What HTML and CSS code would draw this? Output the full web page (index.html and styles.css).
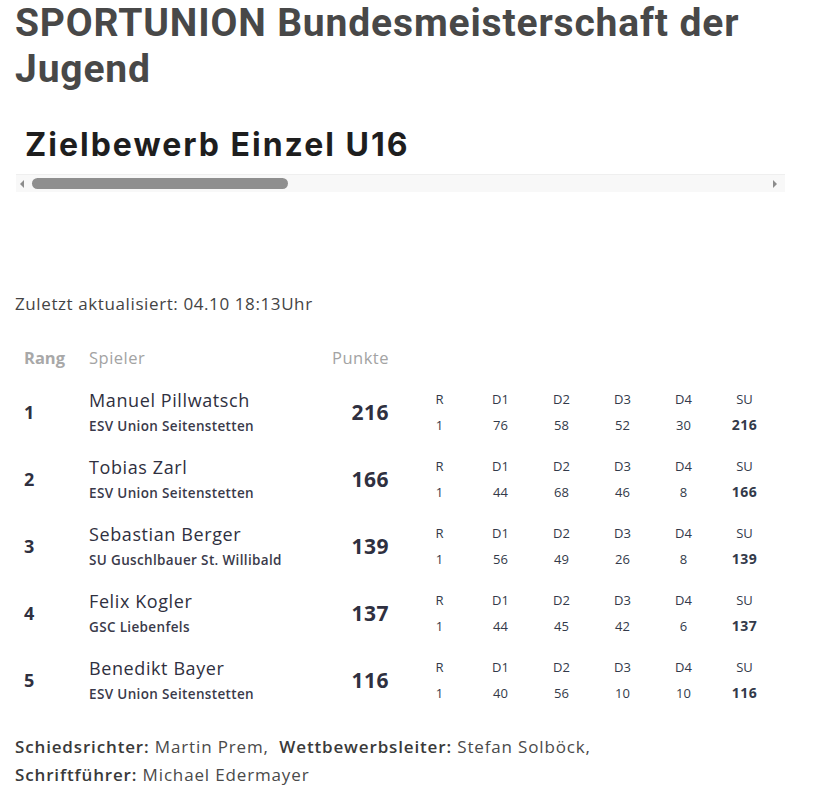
FILE: index.html
```html
<!DOCTYPE html>
<html lang="de">
<head>
<meta charset="utf-8">
<title>SPORTUNION Bundesmeisterschaft der Jugend</title>
<link rel="stylesheet" href="styles.css">
</head>
<body>
<h1 class="title">SPORTUNION Bundesmeisterschaft der Jugend</h1>
<h2 class="subtitle">Zielbewerb Einzel U16</h2>
<div class="scrollbar">
  <span class="arrow arrow-left"></span>
  <div class="track"><div class="thumb"></div></div>
  <span class="arrow arrow-right"></span>
</div>

<p class="updated">Zuletzt aktualisiert: 04.10 18:13Uhr</p>

<div class="results">
  <div class="head">
    <span class="h-rang">Rang</span>
    <span class="h-spieler">Spieler</span>
    <span class="h-punkte">Punkte</span>
    <span></span>
  </div>

  <div class="row">
    <span class="rank">1</span>
    <div class="player"><span class="name">Manuel Pillwatsch</span><span class="club">ESV Union Seitenstetten</span></div>
    <span class="points">216</span>
    <div class="detail">
      <span>R</span><span>D1</span><span>D2</span><span>D3</span><span>D4</span><span>SU</span>
      <span>1</span><span>76</span><span>58</span><span>52</span><span>30</span><span class="sum">216</span>
    </div>
  </div>

  <div class="row">
    <span class="rank">2</span>
    <div class="player"><span class="name">Tobias Zarl</span><span class="club">ESV Union Seitenstetten</span></div>
    <span class="points">166</span>
    <div class="detail">
      <span>R</span><span>D1</span><span>D2</span><span>D3</span><span>D4</span><span>SU</span>
      <span>1</span><span>44</span><span>68</span><span>46</span><span>8</span><span class="sum">166</span>
    </div>
  </div>

  <div class="row">
    <span class="rank">3</span>
    <div class="player"><span class="name">Sebastian Berger</span><span class="club">SU Guschlbauer St. Willibald</span></div>
    <span class="points">139</span>
    <div class="detail">
      <span>R</span><span>D1</span><span>D2</span><span>D3</span><span>D4</span><span>SU</span>
      <span>1</span><span>56</span><span>49</span><span>26</span><span>8</span><span class="sum">139</span>
    </div>
  </div>

  <div class="row">
    <span class="rank">4</span>
    <div class="player"><span class="name">Felix Kogler</span><span class="club">GSC Liebenfels</span></div>
    <span class="points">137</span>
    <div class="detail">
      <span>R</span><span>D1</span><span>D2</span><span>D3</span><span>D4</span><span>SU</span>
      <span>1</span><span>44</span><span>45</span><span>42</span><span>6</span><span class="sum">137</span>
    </div>
  </div>

  <div class="row">
    <span class="rank">5</span>
    <div class="player"><span class="name">Benedikt Bayer</span><span class="club">ESV Union Seitenstetten</span></div>
    <span class="points">116</span>
    <div class="detail">
      <span>R</span><span>D1</span><span>D2</span><span>D3</span><span>D4</span><span>SU</span>
      <span>1</span><span>40</span><span>56</span><span>10</span><span>10</span><span class="sum">116</span>
    </div>
  </div>
</div>

<p class="officials"><b>Schiedsrichter:</b> Martin Prem,&nbsp; <b>Wettbewerbsleiter:</b> Stefan Solböck,<br><b>Schriftführer:</b> Michael Edermayer</p>
</body>
</html>
```

FILE: styles.css
```css
html, body {
  margin: 0;
  padding: 0;
  background: #fff;
}
body {
  padding: 0 15px;
  font-family: "Open Sans", "Noto Sans", sans-serif;
  color: #3a3a45;
}
.title {
  margin: 0;
  font-family: "Roboto", "Open Sans", sans-serif;
  font-weight: 700;
  font-size: 39px;
  line-height: 46px;
  color: #484848;
  letter-spacing: 0.85px;
}
.subtitle {
  margin: 33px 0 0 10px;
  font-family: "Inter", sans-serif;
  font-weight: 700;
  font-size: 32px;
  line-height: 40px;
  letter-spacing: 2px;
  color: #1e1e1e;
}
.scrollbar {
  margin: 9px 0 0 1px;
  width: 769px;
  height: 17px;
  background: #f8f8f8;
  border-top: 1px solid #efefef;
  display: flex;
  align-items: center;
}
.arrow {
  width: 0;
  height: 0;
  border-top: 4px solid transparent;
  border-bottom: 4px solid transparent;
}
.arrow-left {
  margin-left: 4px;
  border-right: 4px solid #8c8c8c;
}
.arrow-right {
  margin-right: 8px;
  border-left: 4px solid #8c8c8c;
}
.track {
  flex: 1;
  padding: 0 8px;
}
.thumb {
  width: 256px;
  height: 11px;
  border-radius: 6px;
  background: #8f8f8f;
}
.updated {
  margin: 101px 0 0;
  font-size: 17px;
  line-height: 22px;
  letter-spacing: 0.6px;
  color: #444;
}
.results {
  margin-top: 32px;
  width: 775px;
}
.head, .row {
  display: grid;
  grid-template-columns: 65px 230px 70px 1fr;
  align-items: center;
}
.head {
  padding-left: 9px;
  font-size: 16.5px;
  line-height: 22px;
  letter-spacing: 0.5px;
  color: #a3a3a3;
  margin-bottom: 9px;
}
.h-rang { font-weight: 700; color: #a8a8a8; letter-spacing: 0; }
.h-punkte { text-align: right; }
.row {
  padding-left: 9px;
  height: 67px;
}
.rank {
  font-weight: 700;
  font-size: 18px;
  color: #2f3040;
}
.player {
  display: flex;
  flex-direction: column;
}
.name {
  font-size: 18px;
  line-height: 22px;
  letter-spacing: 0.6px;
  color: #2f3040;
}
.club {
  margin-top: 7px;
  font-size: 13.5px;
  line-height: 17px;
  letter-spacing: 0.35px;
  font-weight: 600;
  color: #3a3a4a;
}
.points {
  text-align: right;
  font-weight: 700;
  font-size: 21px;
  letter-spacing: 0.5px;
  color: #2f3040;
}
.detail {
  display: grid;
  grid-template-columns: repeat(6, 61px);
  row-gap: 8px;
  margin-left: 20px;
  font-size: 13px;
  line-height: 18px;
  color: #333a4a;
  text-align: center;
}
.detail .sum { font-weight: 700; font-size: 14px; letter-spacing: 0.5px; }
.officials {
  margin: 20px 0 0;
  font-size: 17px;
  line-height: 28px;
  letter-spacing: 0.85px;
  color: #4a4a4a;
}
.officials b { font-weight: 600; color: #3a3a3a; }
```
